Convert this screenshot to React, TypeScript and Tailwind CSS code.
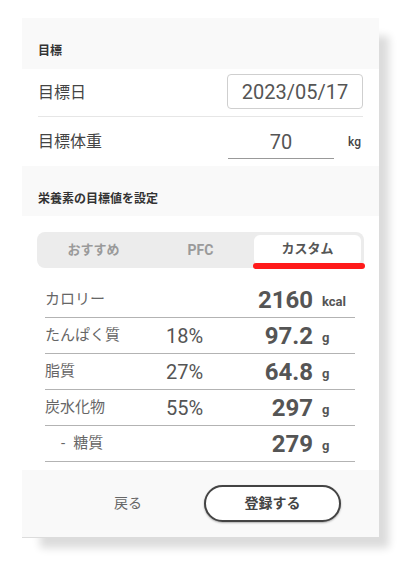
import React from "react";

const font = { fontFamily: 'Roboto, "Noto Sans CJK JP", "Noto Sans", sans-serif' };

type Row = { label: string; pct?: string; value: string; unit: string; indent?: boolean };

const rows: Row[] = [
  { label: "カロリー", value: "2160", unit: "kcal" },
  { label: "たんぱく質", pct: "18%", value: "97.2", unit: "g" },
  { label: "脂質", pct: "27%", value: "64.8", unit: "g" },
  { label: "炭水化物", pct: "55%", value: "297", unit: "g" },
  { label: "糖質", value: "279", unit: "g", indent: true },
];

export default function App() {
  return (
    <div className="w-[402px] h-[584px] bg-white overflow-hidden" style={font}>
      <div className="ml-[22px] mt-[18px] w-[357px] bg-white shadow-[14px_14px_8px_-4px_rgba(0,0,0,0.14)]">
        {/* 目標 header */}
        <div className="h-[51px] bg-[#f9f9f9] flex items-end px-[16px] pb-[9px]">
          <span className="text-[12px] leading-[18px] font-bold text-[#333]">目標</span>
        </div>
        {/* 目標日 */}
        <div className="px-[16px]">
          <div className="h-[48px] flex items-center justify-between border-b border-[#e6e6e6]">
            <span className="text-[16px] text-[#444]">目標日</span>
            <div className="w-[136px] h-[35px] border border-[#cfcfcf] rounded-[4px] flex items-center justify-center text-[20px] text-[#555] mb-[2px]">
              2023/05/17
            </div>
          </div>
          {/* 目標体重 */}
          <div className="h-[49px] flex items-center">
            <span className="text-[16px] text-[#444] flex-1">目標体重</span>
            <div className="w-[106px] h-[33px] mt-[1px] border-b border-[#999] flex items-center justify-center text-[20px] text-[#555]">
              70
            </div>
            <span className="ml-[14px] w-[15px] text-[12px] text-[#444] font-medium">kg</span>
          </div>
        </div>
        {/* section header */}
        <div className="h-[50px] bg-[#f9f9f9] flex items-end px-[16px] pb-[8px]">
          <span className="text-[12px] leading-[18px] font-bold text-[#333]">栄養素の目標値を設定</span>
        </div>
        {/* nutrients */}
        <div className="pt-[16px] pb-[8px]">
          <div className="mx-[15px] h-[36px] bg-[#ececec] rounded-[8px] p-[3px] flex">
            <div className="flex-1 flex items-center justify-center text-[13px] font-bold text-[#9a9a9a]">おすすめ</div>
            <div className="flex-1 flex items-center justify-center text-[14px] font-bold text-[#9a9a9a]">PFC</div>
            <div className="flex-1 relative bg-white rounded-[6px] flex items-center justify-center text-[13px] font-bold text-[#555] pb-[3px]">
              カスタム
              <div className="absolute left-[-1px] right-[-4px] bottom-[-4px] h-[6px] rounded-full bg-[#ff1a1a]" />
            </div>
          </div>
          <div className="mt-[14px] pl-[23px] pr-[24px]">
            {rows.map((r) => (
              <div key={r.label} className="h-[36px] flex items-center border-b border-[#b3b3b3]">
                <div className={`w-[121px] text-[15px] text-[#666] ${r.indent ? "pl-[16px]" : ""}`}>
                  {r.indent ? <span className="mr-[8px]">-</span> : null}
                  {r.label}
                </div>
                <div className="flex-1 text-[20px] text-[#555]">{r.pct ?? ""}</div>
                <div className="text-[24px] font-bold text-[#555] leading-none">{r.value}</div>
                <div className="w-[42px] pl-[9px] text-[13px] font-bold text-[#555] pt-[5px]">{r.unit}</div>
              </div>
            ))}
          </div>
        </div>
        {/* footer */}
        <div className="h-[68px] bg-[#f9f9f9] border-b border-[#dcdcdc] flex items-center">
          <div className="ml-[92px] w-[28px] text-[14px] text-[#666] whitespace-nowrap">戻る</div>
          <button className="ml-[62px] w-[137px] h-[37px] rounded-full border-2 border-[#444] bg-white shadow-[0_1px_2px_rgba(0,0,0,0.3)] text-[14px] font-bold text-[#444] flex items-center justify-center">
            登録する
          </button>
        </div>
      </div>
    </div>
  );
}
